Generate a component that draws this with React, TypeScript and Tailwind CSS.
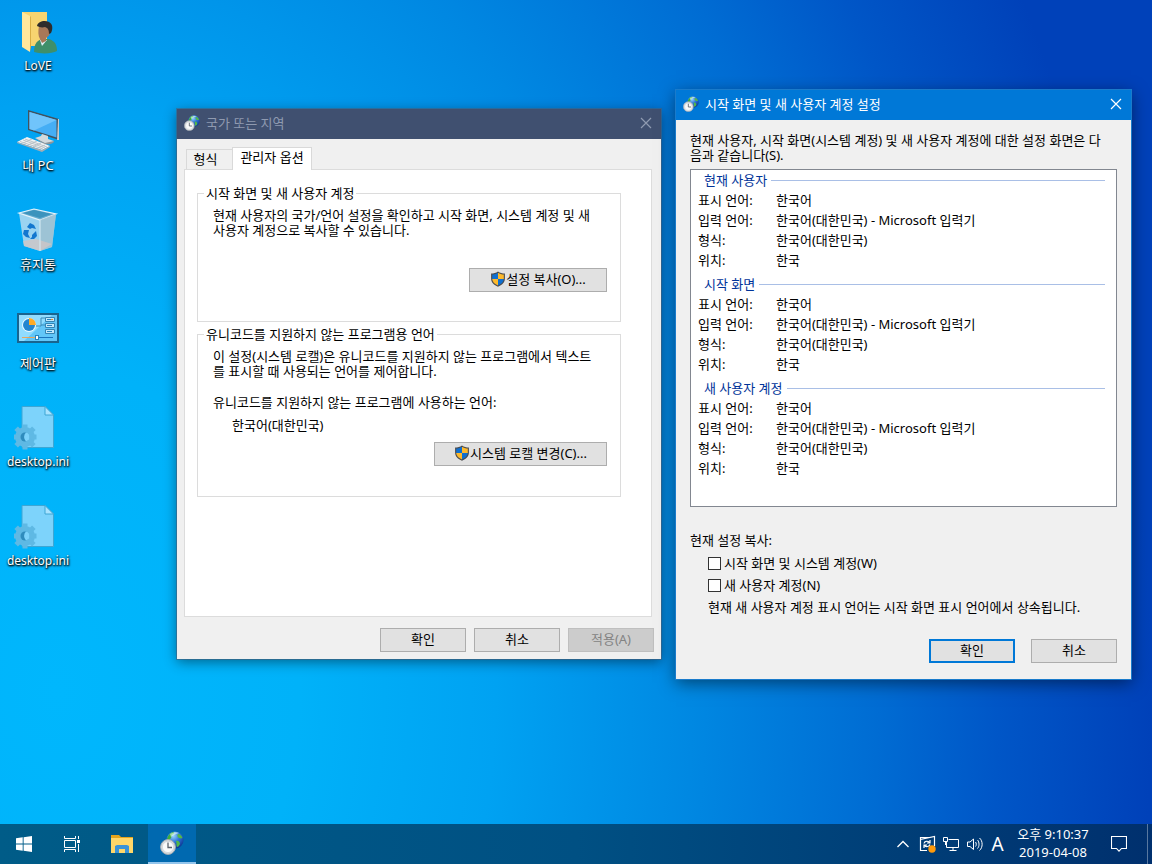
import type { ReactNode } from 'react'

const languageRows = [
  { label: '표시 언어:', value: '한국어' },
  { label: '입력 언어:', value: '한국어(대한민국) - Microsoft 입력기' },
  { label: '형식:', value: '한국어(대한민국)' },
  { label: '위치:', value: '한국' },
]

const accountSections = ['현재 사용자', '시작 화면', '새 사용자 계정']

function RegionIcon({ className }: { className: string }) {
  return (
    <svg viewBox="0 0 24 24" className={className} aria-hidden="true">
      <defs>
        <radialGradient id="globe" cx="0.4" cy="0.25" r="0.8">
          <stop offset="0" stopColor="#9fd8ff" />
          <stop offset="0.45" stopColor="#2f78d8" />
          <stop offset="1" stopColor="#0b2f8c" />
        </radialGradient>
      </defs>
      <circle cx="15" cy="9" r="8.6" fill="url(#globe)" />
      <path d="M7 8C8 4 10 2 13 1C15 1.500 14 3 12 4C11 5 12 7 10 8C9 10 8 10 7 10Z" fill="#3fae3c" />
      <path d="M18 3C20 3 22 5 22.500 7C21 8 20 7 19 7C17 6 17 4 18 3ZM16 10C18 9 20 11 20 13C19 15 18 16 17 16C16 15 17 12 16 10Z" fill="#52b848" />
      <path d="M10 3C13 1 17 1 19 2C16 3 13 4 11 6Z" fill="#e8fff0" opacity="0.6" />
      <circle cx="8" cy="16" r="7.4" fill="#d9dddf" stroke="#a4abb2" strokeWidth="1" />
      <circle cx="8" cy="16" r="5.6" fill="#f9fafa" stroke="#c6cbd0" strokeWidth="0.6" />
      <path d="M8 11.5V16.5H12" fill="none" stroke="#59626c" strokeWidth="1.3" />
    </svg>
  )
}

function ShieldIcon() {
  return (
    <svg viewBox="0 0 16 16" className="h-4 w-4 shrink-0" aria-hidden="true">
      <path d="M8 0.4C6 1.9 3.6 2.5 1.1 2.5V7.5C1.1 11.5 4 14.2 8 15.7C12 14.2 14.9 11.5 14.9 7.5V2.5C12.4 2.5 10 1.9 8 0.4Z" fill="#4b4b4d" />
      <path d="M8 1.7C6.2 2.8 4.3 3.4 2.2 3.5V8H8Z" fill="#0f6fd0" />
      <path d="M8 1.7C9.8 2.8 11.7 3.4 13.8 3.5V8H8Z" fill="#fdb92c" />
      <path d="M2.2 8H8V14.5C4.8 13.2 2.4 11 2.2 8Z" fill="#fdb92c" />
      <path d="M13.8 8H8V14.5C11.2 13.2 13.6 11 13.8 8Z" fill="#0f6fd0" />
    </svg>
  )
}

function CloseIcon() {
  return (
    <svg viewBox="0 0 12 12" className="h-3 w-3" aria-hidden="true">
      <path d="M1 1L11 11M11 1L1 11" fill="none" stroke="currentColor" strokeWidth="1.2" />
    </svg>
  )
}

function UserFolderIcon() {
  return (
    <svg viewBox="0 0 48 48" className="h-12 w-12" aria-hidden="true">
      <path d="M8 3H33V37H8Z" fill="#f7d470" />
      <path d="M8 3L16 7V43L8 38Z" fill="#ffe79c" />
      <path d="M16 7L17 8V38L16 43Z" fill="#d9ae45" />
      <path d="M20 43C20 34 24 31 28 30H35C41 32 43 36 43 42C38 45 26 45 20 43Z" fill="#3f8f6a" />
      <path d="M26 31L28 37L33 31Z" fill="#e3eef5" />
      <path d="M25 17C25 13 37 13 37 19C37 25 34 28 32 29V32L28 34L26 30C24 27 24 22 25 17Z" fill="#a87858" />
      <path d="M23 17C24 12 31 11 35 13C39 15 39 20 37 24L35 25C35 21 34 19 31 18C28 19 25 18 23 17Z" fill="#2f2c2b" />
    </svg>
  )
}

function ComputerIcon() {
  return (
    <svg viewBox="0 0 48 48" className="h-12 w-12" aria-hidden="true">
      <path d="M14 2L45 11V32L14 22Z" fill="#42525e" />
      <path d="M44 11L45 11V32L43 32Z" fill="#c5ccd1" />
      <path d="M15.5 4L42.5 12V29.5L15.5 21Z" fill="#45aef5" />
      <path d="M15.5 4L42.5 12L20 22.5L15.5 21Z" fill="#70c4fb" />
      <path d="M28 26L34 28V31L40 33C38 35 33 36 30 35L21 30L27 28Z" fill="#d4dadd" />
      <path d="M21 30L31 35L40 33V34C37 37 31 37 29 36Z" fill="#8b959c" />
      <path d="M3 34L13 29L36 38L28 42Z" fill="#f0f2f3" />
      <path d="M3 34L28 42V44L3 35ZM28 42L36 38V39L28 44Z" fill="#a4adb3" />
      <path d="M6 33.5L29 41M9 32L31 40M11 31L33 39M9 35L18 31M14 37L23 33M19 38.5L27 35M24 40L31 37" fill="none" stroke="#b6bec4" strokeWidth="0.9" />
    </svg>
  )
}

function RecycleBinIcon() {
  return (
    <svg viewBox="0 0 48 48" className="h-12 w-12" aria-hidden="true">
      <path d="M5 6L24 11L42 7L38 40L26 44L10 39Z" fill="#b5daf0" opacity="0.85" />
      <path d="M5 6L20 2L42 7L26 13Z" fill="#67add0" />
      <path d="M9 6L20 3L38 7L26 11Z" fill="#3c93bd" />
      <path d="M5 6L20 2L42 7L26 13Z" fill="none" stroke="#e4f3fb" strokeWidth="1.2" />
      <path d="M26 13L42 7L38 40L26 44Z" fill="#9ebfce" opacity="0.8" />
      <path d="M9 34L22 32L38 37L26 44L10 39Z" fill="#d0c6c6" opacity="0.8" />
      <path d="M26 13V44" stroke="#d9edf6" strokeWidth="1" />
      <path d="M13 20L16 16L20 18L22 22L18 21L16 22ZM10 23L15 23L14 27L16 31L12 30L9 27ZM18 28L22 24L23 29L20 32L16 32L18 30Z" fill="#1277cf" />
    </svg>
  )
}

function ControlPanelIcon() {
  return (
    <svg viewBox="0 2 48 48" className="h-12 w-12" aria-hidden="true">
      <rect x="3" y="9" width="42" height="30" fill="#19648f" />
      <rect x="5" y="11" width="38" height="26" fill="#62c6f8" />
      <path d="M5 11H38L10 37H5Z" fill="#91dcff" />
      <circle cx="15" cy="21" r="7" fill="#eaf8ff" />
      <circle cx="15" cy="21" r="6" fill="#2485cf" />
      <path d="M15 21V14A7 7 0 0 1 22 21Z" fill="#ffab28" />
      <path d="M22 22H27V14H31M27 21H31" fill="none" stroke="#3b8cb9" strokeWidth="1" />
      <path d="M31.500 13.500H40.500V17.500H31.500ZM31.500 19.500H40.500V23.500H31.500ZM31.500 25.500H40.500V29.500H31.500Z" fill="#c2e8fb" stroke="#3484b3" strokeWidth="1" />
      <path d="M33 15.500H38M33 21.500H38M33 27.500H38" stroke="#2684be" strokeWidth="1" />
      <path d="M37 15.500H39" stroke="#f48b20" strokeWidth="1" />
      <path d="M8 33.500H22" stroke="#e6a55f" strokeWidth="1" />
      <path d="M24 33.500H39" stroke="#1b74bd" strokeWidth="1" />
      <rect x="21.500" y="31.500" width="3" height="4" fill="#fff" stroke="#2684be" strokeWidth="1" />
    </svg>
  )
}

function IniFileIcon() {
  return (
    <svg viewBox="0 2 48 48" className="h-12 w-12" aria-hidden="true">
      <path d="M8 3.5H31L39.5 12V44.5H8Z" fill="#7dd3fb" stroke="#3ea6d4" strokeWidth="1" />
      <path d="M31 3.5V12H39.5Z" fill="#a9e3ff" stroke="#3ea6d4" strokeWidth="1" />
      <g fill="#5fb9e4">
        <circle cx="11" cy="34" r="10" />
        <path d="M8.500 21.500H13.500V46.500H8.500Z" />
        <path d="M8.500 21.500H13.500V46.500H8.500Z" transform="rotate(45 11 34)" />
        <path d="M8.500 22.500H13.500V45.500H8.500Z" transform="rotate(90 11 34)" />
        <path d="M8.500 21.500H13.500V46.500H8.500Z" transform="rotate(135 11 34)" />
      </g>
      <circle cx="11" cy="34" r="4.500" fill="#2f8cbd" />
      <path d="M12 29.600A4.500 4.500 0 0 1 12 38.400A6 6 0 0 1 12 29.600Z" fill="#7dd3fb" />
    </svg>
  )
}

function DesktopShortcut({ label, icon, latin = false }: { label: string; icon: ReactNode; latin?: boolean }) {
  return (
    <button className="flex w-[76px] flex-col items-center">
      {icon}
      <span
        className={`leading-[18px] whitespace-nowrap text-white [text-shadow:1px_1px_2px_#000,0_1px_2px_#000] ${latin ? 'text-[12px]' : 'text-[13px]'}`}
      >
        {label}
      </span>
    </button>
  )
}

function DialogButton({ children, disabled = false, primary = false, className = 'w-[86px]' }: {
  children: ReactNode
  disabled?: boolean
  primary?: boolean
  className?: string
}) {
  const tone = disabled
    ? 'border border-[#bfbfbf] bg-[#cccccc] text-[#838383]'
    : primary
      ? 'border-2 border-[#0078d7] bg-[#e1e1e1]'
      : 'border border-[#adadad] bg-[#e1e1e1]'

  return (
    <button disabled={disabled} className={`flex h-6 items-center justify-center pb-0.5 whitespace-nowrap ${tone} ${className}`}>
      {children}
    </button>
  )
}

function TitleBar({ title, className }: { title: string; className: string }) {
  return (
    <header className={`flex h-[30px] items-center justify-between pr-2 pb-0.5 pl-[7px] ${className}`}>
      <div className="flex items-center gap-[6px]">
        <RegionIcon className="h-4 w-4" />
        <h1>{title}</h1>
      </div>
      <button aria-label="닫기" className="p-px">
        <CloseIcon />
      </button>
    </header>
  )
}

function RegionWindow() {
  return (
    <section className="absolute top-[109px] left-[177px] w-[484px] bg-[#f0f0f0] shadow-[0_3px_12px_rgba(0,0,0,0.45)] outline outline-[#44607f]/60">
      <TitleBar title="국가 또는 지역" className="bg-[#405070] text-[#8f9ab0]" />
      <div className="px-[7px] pt-2 pb-[7px]">
        <div role="tablist" className="flex items-end pl-[2px]">
          <button role="tab" aria-selected="false" className="h-5 w-[46px] border border-r-0 border-b-0 border-[#d9d9d9] pr-2">
            형식
          </button>
          <button role="tab" aria-selected="true" className="relative -mb-px h-[23px] w-20 border border-b-0 border-[#d9d9d9] bg-white pb-1">
            관리자 옵션
          </button>
        </div>
        <div role="tabpanel" className="mr-[2px] min-h-[448px] border border-[#dcdcdc] bg-white pt-4 pr-[30px] pl-3">
          <fieldset className="h-[136px] border border-[#dcdcdc] pr-[13px] pl-[15px]">
            <legend className="-ml-[9px] px-[2px]">시작 화면 및 새 사용자 계정</legend>
            <p className="pt-[7px] pr-2">
              현재 사용자의 국가/언어 설정을 확인하고 시작 화면, 시스템 계정 및 새 사용자 계정으로 복사할 수 있습니다.
            </p>
            <div className="mt-[30px] flex justify-end">
              <DialogButton className="w-[138px]">
                <ShieldIcon />설정 복사(O)...
              </DialogButton>
            </div>
          </fieldset>
          <fieldset className="mt-[5px] h-[170px] border border-[#dcdcdc] pr-[13px] pl-[15px]">
            <legend className="-ml-[9px] px-[2px]">유니코드를 지원하지 않는 프로그램용 언어</legend>
            <p className="pt-[7px] pr-2">
              이 설정(시스템 로캘)은 유니코드를 지원하지 않는 프로그램에서 텍스트를 표시할 때 사용되는 언어를 제어합니다.
            </p>
            <p className="mt-4">유니코드를 지원하지 않는 프로그램에 사용하는 언어:</p>
            <p className="mt-2 ml-[19px]">한국어(대한민국)</p>
            <div className="mt-[9px] flex justify-end">
              <DialogButton className="w-[173px]">
                <ShieldIcon />시스템 로캘 변경(C)...
              </DialogButton>
            </div>
          </fieldset>
        </div>
        <footer className="mt-[11px] flex justify-end gap-2">
          <DialogButton>확인</DialogButton>
          <DialogButton>취소</DialogButton>
          <DialogButton disabled>적용(A)</DialogButton>
        </footer>
      </div>
    </section>
  )
}

function AccountWindow() {
  return (
    <section className="absolute top-[90px] left-[676px] w-[455px] bg-[#f0f0f0] shadow-[0_4px_16px_rgba(0,0,0,0.5)] outline outline-[#1a7bcb]">
      <TitleBar title="시작 화면 및 새 사용자 계정 설정" className="bg-[#0078d7] text-white" />
      <div className="px-[14px] pt-[13px] pb-4">
        <p className="pr-2">
          현재 사용자, 시작 화면(시스템 계정) 및 새 사용자 계정에 대한 설정 화면은 다음과 같습니다(S).
        </p>
        <div className="mt-[6px] min-h-[338px] space-y-1 border border-[#828790] bg-white pr-[11px] pl-[7px]">
          {accountSections.map((title) => (
            <section key={title}>
              <div className="flex h-5 items-center gap-1 pl-[6px]">
                <h2 className="text-[#003399]">{title}</h2>
                <div className="h-px flex-1 bg-[#a9bfe6]" />
              </div>
              <dl className="grid grid-cols-[78px_1fr] leading-5">
                {languageRows.map((row) => (
                  <div key={row.label} className="contents">
                    <dt>{row.label}</dt>
                    <dd>{row.value}</dd>
                  </div>
                ))}
              </dl>
            </section>
          ))}
        </div>
        <p className="mt-[26px]">현재 설정 복사:</p>
        <div className="mt-2 ml-[18px] flex flex-col gap-[7px]">
          <label className="flex items-center gap-[3px]">
            <input type="checkbox" className="h-[13px] w-[13px] appearance-none border border-[#333] bg-white" />
            시작 화면 및 시스템 계정(W)
          </label>
          <label className="flex items-center gap-[3px]">
            <input type="checkbox" className="h-[13px] w-[13px] appearance-none border border-[#333] bg-white" />
            새 사용자 계정(N)
          </label>
          <p>현재 새 사용자 계정 표시 언어는 시작 화면 표시 언어에서 상속됩니다.</p>
        </div>
        <footer className="mt-6 flex justify-end gap-4">
          <DialogButton primary>확인</DialogButton>
          <DialogButton>취소</DialogButton>
        </footer>
      </div>
    </section>
  )
}

function Taskbar() {
  return (
    <footer className="flex h-10 items-stretch justify-between bg-linear-to-r from-[#005c88] via-[#005083] to-[#00306e] text-white">
      <div className="flex">
        <button aria-label="시작" className="flex w-12 items-center justify-center">
          <svg viewBox="0 0 16 16" className="h-4 w-4" fill="currentColor">
            <path d="M0 2.300L6.700 1.300V7.500H0ZM7.600 1.200L16 0V7.500H7.600ZM0 8.500H6.700V14.700L0 13.700ZM7.600 8.500H16V16L7.600 14.800Z" />
          </svg>
        </button>
        <button aria-label="작업 보기" className="flex w-12 items-center justify-center">
          <svg viewBox="0 0 16 16" className="h-4 w-4" fill="none" stroke="currentColor">
            <path d="M0.500 0V2.500H11.500V0M0.500 16V13.500H11.500V16M0.500 4.500H11.500V11.500H0.500ZM14.500 0V3M14.500 8V16" />
            <path d="M13 4H16V7H13Z" fill="currentColor" stroke="none" />
          </svg>
        </button>
        <button aria-label="파일 탐색기" className="flex w-[52px] items-center justify-center">
          <svg viewBox="0 0 24 20" className="h-5 w-6">
            <path d="M1 1H9L11 3H23V18H1Z" fill="#e5a51c" />
            <path d="M1 4H23V19H1Z" fill="#ffd769" />
            <path d="M5 19V12L7 11H17L19 12V19H15V15H9V19Z" fill="#3a93d8" />
          </svg>
        </button>
        <button aria-label="국가 또는 지역" className="flex w-12 items-center justify-center border-b-2 border-[#93c5ec] bg-[#0069b0]">
          <RegionIcon className="h-6 w-6" />
        </button>
      </div>

      <div className="flex items-center">
        <button aria-label="숨겨진 아이콘" className="flex w-6 justify-center">
          <svg viewBox="0 0 12 8" className="h-2 w-3" fill="none" stroke="currentColor" strokeWidth="1.300">
            <path d="M0.500 7L6 1.500L11.500 7" />
          </svg>
        </button>
        <button aria-label="업데이트" className="flex w-6 justify-center">
          <svg viewBox="0 0 18 18" className="h-[18px] w-[18px]" fill="none" stroke="currentColor" strokeWidth="1.200">
            <path d="M9 15.500H2.500V4.500L16.500 1.500V11M2.500 4.500V2.500H11" />
            <path d="M6 8.500C6.500 6 9.500 5.500 11.500 7.500M12 5V8H9M12 9.500C11 12 8 12 6.500 10.500M6 13V10H9" />
            <circle cx="14" cy="14" r="3.700" fill="#ff9a0c" stroke="none" />
          </svg>
        </button>
        <button aria-label="네트워크" className="flex w-6 justify-center">
          <svg viewBox="0 0 16 16" className="h-4 w-4" fill="none" stroke="currentColor">
            <path d="M5.500 3.500H15.500V11.500H3.500V6M10 11.500V14.500M6.500 14.500H13.500M0.500 1.500H4.500V5.500H0.500ZM2.500 5.500V9" />
          </svg>
        </button>
        <button aria-label="볼륨" className="flex w-6 justify-center">
          <svg viewBox="0 0 16 16" className="h-4 w-4" fill="none" stroke="currentColor">
            <path d="M0.500 6V10.500H3L6.500 13.500V3L3 6ZM8.500 6C9.500 7 9.500 9.500 8.500 10.500M10.500 4C12.500 6 12.500 10.500 10.500 12.500M12.500 2C16 5 16 11.500 12.500 14.500" />
          </svg>
        </button>
        <button className="w-[21px] text-[19px] leading-5">A</button>
        <button className="w-[90px] pb-0.5 text-center leading-[18px]">
          오후 9:10:37
          <br />
          2019-04-08
        </button>
        <button aria-label="알림" className="flex w-[42px] justify-center">
          <svg viewBox="0 0 16 16" className="h-4 w-4" fill="none" stroke="currentColor" strokeWidth="1.100">
            <path d="M0.500 0.500H15.500V12.500H10.500L8 15.200L5.500 12.500H0.500Z" />
          </svg>
        </button>
        <div className="mr-1 ml-[7px] h-10 w-px bg-[#5878a0]" />
      </div>
    </footer>
  )
}

export default function App() {
  return (
    <div className="relative flex min-h-screen flex-col overflow-hidden bg-[radial-gradient(ellipse_95%_170%_at_5%_80%,#00b7fd_0%,#00b2f9_22%,#00a2f2_40%,#0088e2_58%,#006cd3_75%,#0056c7_86%,#0041b9_100%)] font-['Noto_Sans','Noto_Sans_CJK_KR',sans-serif] text-[13px] leading-[15px] text-black">
      <main className="flex-1">
        <nav className="flex flex-col gap-[33px] pt-[9px]">
          <DesktopShortcut label="LoVE" icon={<UserFolderIcon />} latin />
          <DesktopShortcut label="내 PC" icon={<ComputerIcon />} />
          <DesktopShortcut label="휴지통" icon={<RecycleBinIcon />} />
          <DesktopShortcut label="제어판" icon={<ControlPanelIcon />} />
          <DesktopShortcut label="desktop.ini" icon={<IniFileIcon />} latin />
          <DesktopShortcut label="desktop.ini" icon={<IniFileIcon />} latin />
        </nav>
        <RegionWindow />
        <AccountWindow />
      </main>
      <Taskbar />
    </div>
  )
}
